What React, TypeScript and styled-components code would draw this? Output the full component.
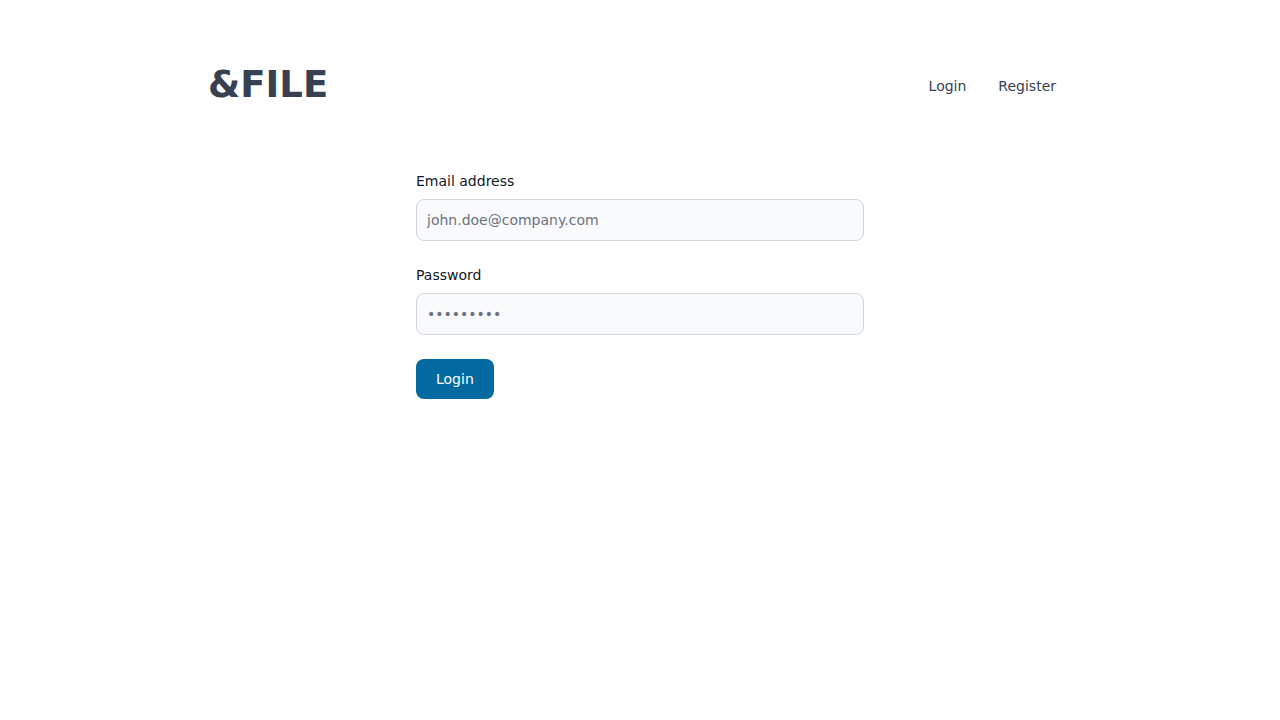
import React from "react";
import styled, { createGlobalStyle } from "styled-components";

const GlobalStyle = createGlobalStyle`
  html, body {
    margin: 0;
    padding: 0;
    background: #ffffff;
    font-family: "DejaVu Sans", sans-serif;
  }
  * {
    box-sizing: border-box;
  }
`;

const Page = styled.div`
  min-height: 100vh;
  background: #ffffff;
`;

const Header = styled.header`
  max-width: 896px;
  margin: 0 auto;
  padding: 65px 16px 0;
  display: flex;
  align-items: center;
  justify-content: space-between;
`;

const Logo = styled.a`
  font-size: 37px;
  line-height: 40px;
  font-weight: 700;
  color: #374151;
  text-decoration: none;
`;

const Nav = styled.nav`
  display: flex;
  align-items: center;
`;

const NavLink = styled.a`
  padding: 0 16px;
  font-size: 14px;
  line-height: 20px;
  color: #374151;
  text-decoration: none;
  margin-top: 2px;
`;

const Main = styled.main`
  display: flex;
  justify-content: center;
  padding-top: 66px;
`;

const Form = styled.form`
  width: 448px;
  display: flex;
  flex-direction: column;
`;

const Field = styled.div`
  margin-bottom: 24px;
`;

const Label = styled.label`
  display: block;
  margin-bottom: 8px;
  font-size: 14px;
  line-height: 20px;
  color: #111827;
`;

const Input = styled.input`
  display: block;
  width: 100%;
  height: 42px;
  padding: 10px;
  font-family: "DejaVu Sans", sans-serif;
  font-size: 14px;
  line-height: 20px;
  color: #111827;
  background: #f9fafb;
  border: 1px solid #d1d5db;
  border-radius: 8px;
  outline: none;

  &::placeholder {
    color: #6b7280;
  }
`;

const Button = styled.button`
  align-self: flex-start;
  height: 40px;
  padding: 0 20px;
  font-family: "DejaVu Sans", sans-serif;
  font-size: 14px;
  line-height: 20px;
  color: #ffffff;
  background: #0369a1;
  border: none;
  border-radius: 8px;
  cursor: pointer;
`;

function App() {
  return (
    <Page>
      <GlobalStyle />
      <Header>
        <Logo href="#">&amp;FILE</Logo>
        <Nav>
          <NavLink href="#">Login</NavLink>
          <NavLink href="#">Register</NavLink>
        </Nav>
      </Header>
      <Main>
        <Form onSubmit={(e) => e.preventDefault()}>
          <Field>
            <Label htmlFor="email">Email address</Label>
            <Input id="email" type="email" placeholder="john.doe@company.com" />
          </Field>
          <Field>
            <Label htmlFor="password">Password</Label>
            <Input id="password" type="password" placeholder="•••••••••" />
          </Field>
          <Button type="submit">Login</Button>
        </Form>
      </Main>
    </Page>
  );
}

export default App;
